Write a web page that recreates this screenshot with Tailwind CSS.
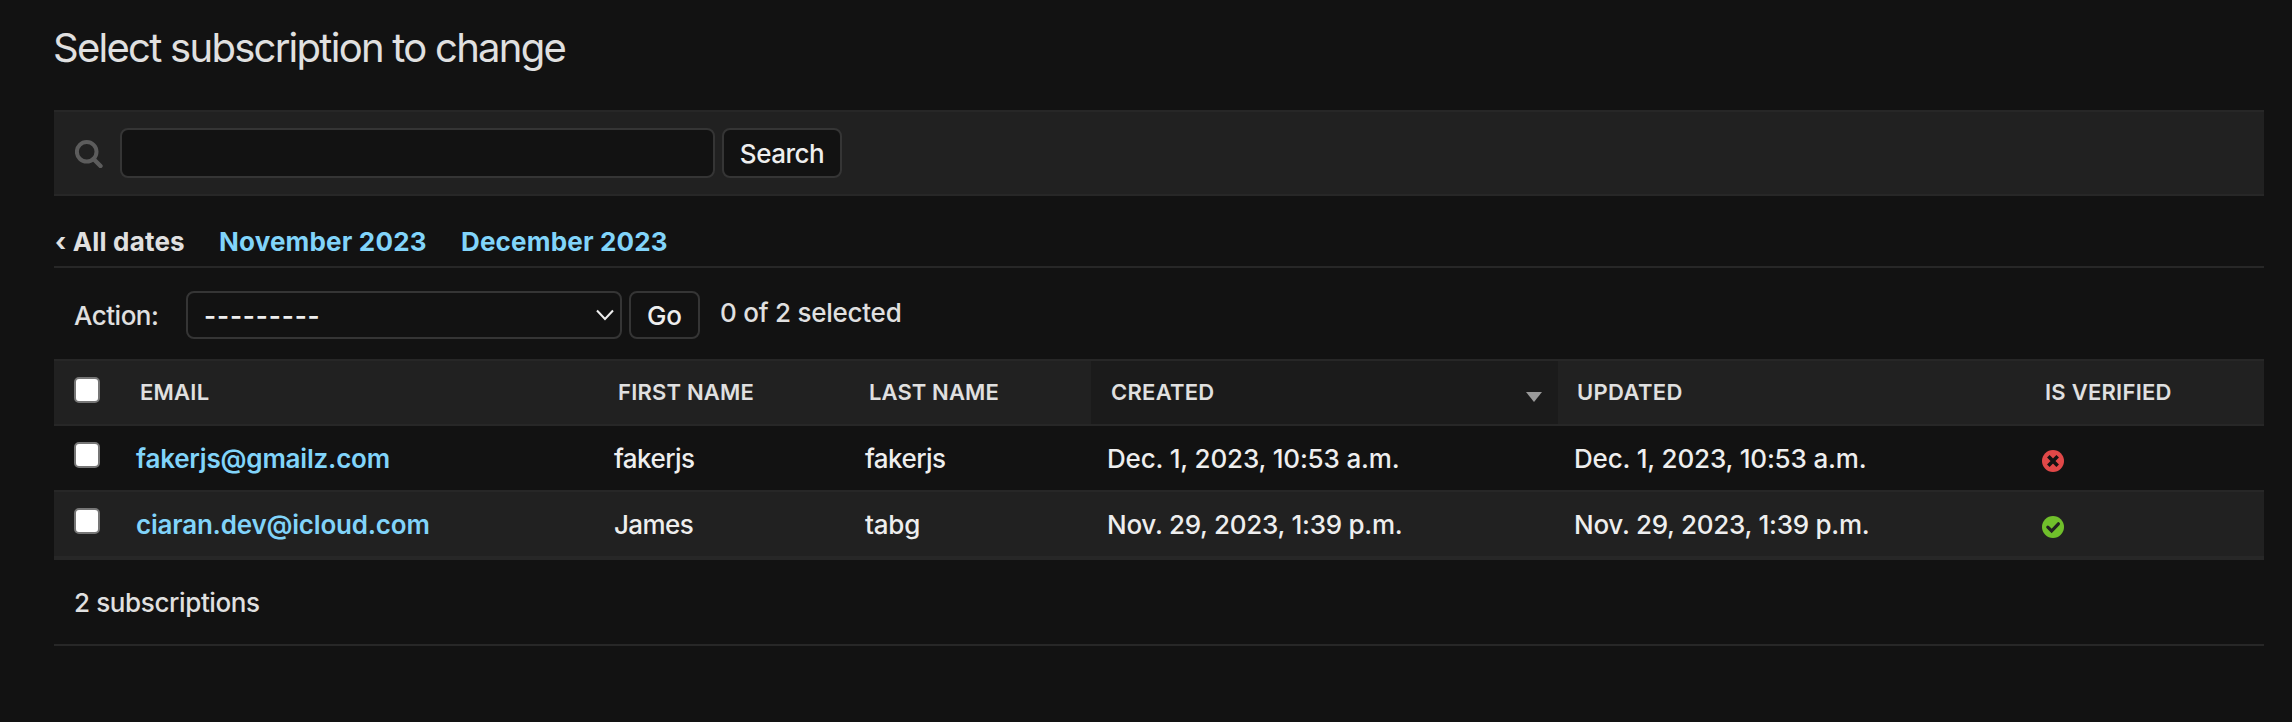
<!DOCTYPE html>
<html lang="en">
<head>
<meta charset="utf-8">
<title>Select subscription to change</title>
<script src="https://cdn.jsdelivr.net/npm/@tailwindcss/browser@4"></script>
</head>
<body class="min-h-screen bg-[#121212] pl-[54px] pr-7 font-['Inter',sans-serif] font-[450] text-[26px] leading-[32px] text-[#e0e0e0]">
<main class="flex flex-col">
  <h1 class="-ml-px flex h-[110px] pt-6 text-[40px] font-normal leading-[48px] tracking-[-1.73px]"><span>Select subscription to change</span></h1>

  <form class="flex h-[86px] items-center border-y-2 border-[#272727] bg-[#212121] pl-[21px]">
    <svg class="mr-[17px] mt-0.5 size-7" viewBox="0 0 28 28" fill="none" stroke="#5c5c5c"><circle cx="11.7" cy="11.8" r="9.8" stroke-width="4"/><path d="M18.5 19l7 7" stroke-width="4.4" stroke-linecap="round"/></svg>
    <div class="mr-[7px] h-[50px] w-[595px] rounded-lg border-2 border-[#353535] bg-[#121212]"></div>
    <button type="button" class="h-[50px] w-[120px] rounded-lg border-2 border-[#353535] bg-[#121212] tracking-[-0.5px] text-[#eee]"><span class="relative top-px">Search</span></button>
  </form>

  <nav class="flex h-[72px] border-b-2 border-[#272727] pt-[30px] font-bold tracking-[0.18px]">
    <span class="w-[165px] pl-px">‹ All dates</span>
    <span class="w-[242px] text-[#81d4fa]">November 2023</span>
    <span class="text-[#81d4fa]">December 2023</span>
  </nav>

  <div class="flex h-[91px] pl-5 pt-[23px]">
    <span class="w-[112px] pt-[9px] tracking-[-0.5px]">Action:</span>
    <div class="mr-[7px] flex h-12 w-[436px] items-center justify-between rounded-lg border-2 border-[#353535] pl-4 pr-1.5 text-[#eee]">
      <span class="pt-0.5 font-semibold tracking-[0.85px]">---------</span>
      <svg class="h-3 w-[18px]" viewBox="0 0 18 12" fill="none" stroke="#eee" stroke-width="2"><path d="M1 1.5l8 8.5l8-8.5"/></svg>
    </div>
    <button type="button" class="mr-5 h-12 w-[71px] rounded-lg border-2 border-[#353535] text-[#eee]"><span class="relative top-px">Go</span></button>
    <span class="pt-1.5 tracking-[-0.25px]">0 of 2 selected</span>
  </div>

  <section class="flex flex-col border-b-4 border-[#272727]">
    <div class="flex h-[67px] border-y-2 border-[#272727] bg-[#212121] text-[22px] font-semibold leading-[63px] tracking-[0.25px]">
      <div class="w-[86px] pl-5 pt-4"><div class="size-[26px] rounded-[5px] border-2 border-[#767676] bg-white"></div></div>
      <div class="w-[478px]">EMAIL</div>
      <div class="w-[251px] tracking-[0.2px]">FIRST NAME</div>
      <div class="w-[222px] tracking-[0.1px]">LAST NAME</div>
      <div class="flex w-[467px] items-start justify-between bg-[#1b1b1b] pl-5 pr-4">CREATED<svg class="mt-[31px] h-2.5 w-4" viewBox="0 0 16 10"><path d="M0 0h16l-8 10z" fill="#999"/></svg></div>
      <div class="w-[486px] pl-[19px] tracking-[0.35px]">UPDATED</div>
      <div class="pl-px">IS VERIFIED</div>
    </div>
    <div class="flex h-16 tracking-[-0.2px] text-[#eee] leading-[66px]">
      <div class="w-[82px] pl-5 pt-4"><div class="size-[26px] rounded-[5px] border-2 border-[#767676] bg-white"></div></div>
      <div class="w-[478px] font-semibold text-[#81d4fa]">fakerjs@gmailz.com</div>
      <div class="w-[251px] tracking-[-0.55px]">fakerjs</div>
      <div class="w-[242px] tracking-[-0.55px]">fakerjs</div>
      <div class="w-[467px] tracking-[-0.17px]">Dec. 1, 2023, 10:53 a.m.</div>
      <div class="w-[468px] tracking-[-0.17px]">Dec. 1, 2023, 10:53 a.m.</div>
      <svg class="mt-6 size-[22px]" viewBox="0 0 22 22"><circle cx="11" cy="11" r="11" fill="#e04848"/><path d="M7.6 7.6l6.8 6.8M14.4 7.6l-6.8 6.8" stroke="#121212" stroke-width="3.6" stroke-linecap="square"/></svg>
    </div>
    <div class="flex h-[66px] border-t-2 border-[#272727] bg-[#212121] tracking-[-0.2px] text-[#eee] leading-[66px]">
      <div class="w-[82px] pl-5 pt-4"><div class="size-[26px] rounded-[5px] border-2 border-[#767676] bg-white"></div></div>
      <div class="w-[478px] font-semibold text-[#81d4fa]">ciaran.dev@icloud.com</div>
      <div class="w-[251px] tracking-[-0.6px]">James</div>
      <div class="w-[242px]">tabg</div>
      <div class="w-[467px] tracking-[-0.27px]">Nov. 29, 2023, 1:39 p.m.</div>
      <div class="w-[468px] tracking-[-0.27px]">Nov. 29, 2023, 1:39 p.m.</div>
      <svg class="mt-6 size-[22px]" viewBox="0 0 22 22"><circle cx="11" cy="11" r="11" fill="#70bf2b"/><path d="M5.8 11.2l3.8 3.8l6.8-7.2" fill="none" stroke="#212121" stroke-width="3.2" stroke-linecap="round"/></svg>
    </div>
  </section>

  <p class="h-[86px] border-b-2 border-[#272727] pl-5 pt-[27px] tracking-[-0.38px]">2 subscriptions</p>
</main>
</body>
</html>
